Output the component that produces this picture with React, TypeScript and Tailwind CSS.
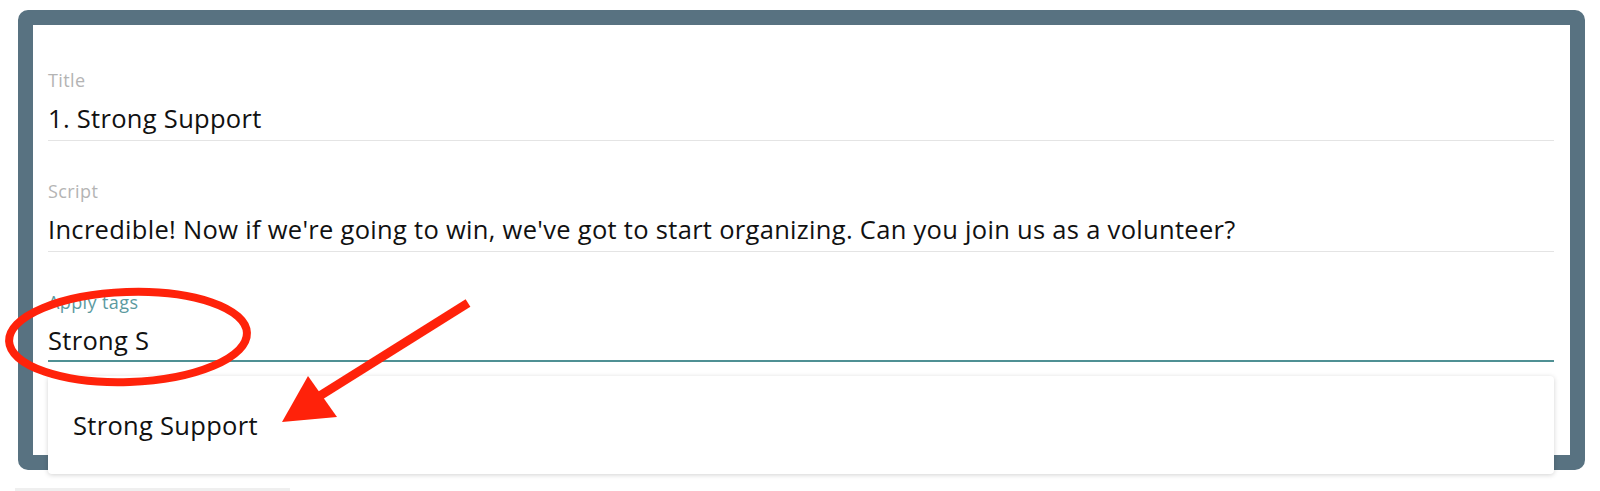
const font = { fontFamily: '"Open Sans", "Liberation Sans", sans-serif' };

function Field({
  label,
  value,
  active = false,
}: {
  label: string;
  value: string;
  active?: boolean;
}) {
  return (
    <div className={active ? "border-b-2 border-[#4f9094] pb-[5px]" : "border-b border-[#e4e4e4] pb-[7px]"}>
      <div
        className={`text-[18px] leading-[20px] tracking-[0.4px] ${active ? "text-[#5b9a9f]" : "text-[#b4b4b4]"}`}
      >
        {label}
      </div>
      <div className="mt-[13px] text-[25.5px] leading-[30px] tracking-[0.3px] text-[#111]">{value}</div>
    </div>
  );
}

function Annotations() {
  return (
    <svg
      className="pointer-events-none absolute left-0 top-0"
      width="1600"
      height="491"
      viewBox="0 0 1600 491"
    >
      <ellipse
        cx="128"
        cy="337"
        rx="119"
        ry="45"
        fill="none"
        stroke="#ff220a"
        strokeWidth="8"
        transform="rotate(-2 128 337)"
      />
      <line x1="468" y1="303" x2="318" y2="397" stroke="#ff220a" strokeWidth="9" />
      <polygon points="282,422 308,376 337,417" fill="#ff220a" />
    </svg>
  );
}

export default function App() {
  return (
    <div className="relative h-[491px] w-[1600px] overflow-hidden bg-white" style={font}>
      <div className="ml-[18px] mt-[10px] h-[460px] w-[1567px] rounded-[10px] border-[15px] border-[#587281] bg-white">
        <div className="relative flex flex-col gap-[40px] pl-[15px] pr-[16px] pt-[45px]">
          <Field label="Title" value="1. Strong Support" />
          <Field
            label="Script"
            value="Incredible! Now if we're going to win, we've got to start organizing. Can you join us as a volunteer?"
          />
          <Field label="Apply tags" value="Strong S" active />

          <div className="absolute left-[15px] right-[16px] top-[351px] flex h-[98px] items-center rounded-[4px] bg-white pl-[25px] text-[25.5px] tracking-[0.3px] text-[#111] shadow-[0_1px_5px_rgba(0,0,0,0.18)]">
            Strong Support
          </div>
        </div>
      </div>
      <div className="ml-[15px] mt-[18px] h-[3px] w-[275px] bg-[#efefef]" />
      <Annotations />
    </div>
  );
}
